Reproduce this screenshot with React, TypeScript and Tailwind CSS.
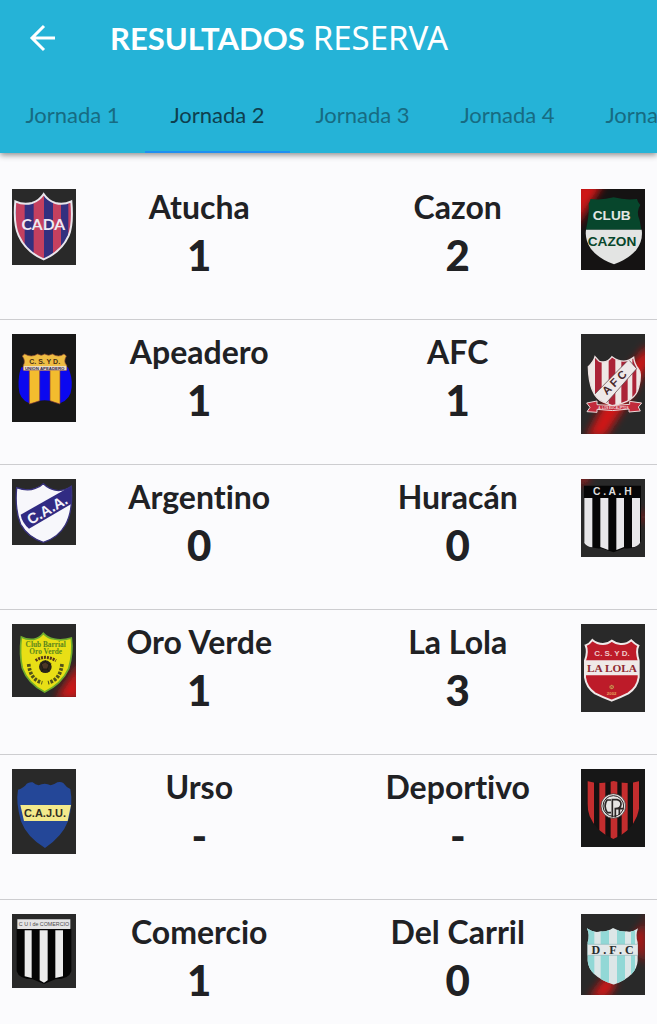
import { useState, type ReactNode } from 'react';

type CrestProps = {
  title: string;
  height: number;
  children: ReactNode;
};

const Crest = ({ title, height, children }: CrestProps) => (
  <svg
    role="img"
    aria-label={title}
    viewBox={`0 0 192 ${height}`}
    className="block w-16 shrink-0 bg-[#292929]"
  >
    {children}
  </svg>
);

// Diagonal red light behind some of the crests
const Glow = ({ id, d }: { id: string; d: string }) => (
  <>
    <defs>
      <filter id={id} x="-50%" y="-50%" width="200%" height="200%">
        <feGaussianBlur stdDeviation="12" />
      </filter>
    </defs>
    <path d={d} fill="#d01414" filter={`url(#${id})`} />
  </>
);

const Atucha = () => (
  <Crest title="Atucha" height={228}>
    <clipPath id="atucha">
      <path d="M95 15Q82 35 60 42Q34 49 10 37Q4 105 20 140Q42 189 95 211Q148 189 170 140Q184 105 178 37Q154 49 130 42Q108 35 95 15Z" />
    </clipPath>
    <g clipPath="url(#atucha)">
      <rect width="192" height="228" fill="#33307f" />
      <path d="M12 0h26v228H12zM65 0h31v228H65zM123 0h24v228h-24zM169 0h14v228h-14z" fill="#c4405f" />
    </g>
    <path
      d="M95 15Q82 35 60 42Q34 49 10 37Q4 105 20 140Q42 189 95 211Q148 189 170 140Q184 105 178 37Q154 49 130 42Q108 35 95 15Z"
      fill="none"
      stroke="#e9e6ec"
      strokeWidth="6"
    />
    <text x="94" y="124" textAnchor="middle" className="fill-[#eee9f2] font-['Lato'] text-[47px] font-bold">
      CADA
    </text>
  </Crest>
);

const Cazon = () => (
  <Crest title="Cazon" height={243}>
    <rect width="192" height="243" fill="#151313" />
    <Glow id="cazon-glow" d="M-20-20H70L26 50L-20 120Z" />
    <path d="M23 44Q29 33 28 30Q65 34 98 25Q132 34 168 30Q170 40 178 48Q164 68 176 94L181 122H15Q26 70 23 44Z" fill="#07462c" />
    <path d="M15 122H182Q187 156 165 184Q142 210 99 226Q54 210 30 180Q11 154 15 122Z" fill="#e3e4e3" />
    <text x="92" y="93" textAnchor="middle" className="fill-[#e3e6e4] font-['Liberation_Sans'] text-[41px] font-bold">
      CLUB
    </text>
    <text x="93" y="170" textAnchor="middle" className="fill-[#07462c] font-['Liberation_Sans'] text-[41px] font-bold">
      CAZON
    </text>
  </Crest>
);

const Apeadero = () => (
  <Crest title="Apeadero" height={264}>
    <rect width="192" height="264" fill="#181818" />
    <path d="M28 100H168Q182 130 179 160Q177 196 144 208Q98 190 52 208Q21 196 20 160Q18 125 28 100Z" fill="#0b08f0" />
    <path d="M52 106h31v94l-14 5-17 5zM114 106h30v104l-16-5-14-5z" fill="#f3bc2e" stroke="#873a3a" strokeWidth="2" />
    <path
      d="M31 66L38 60Q58 72 77 60Q88 68 98 60Q110 68 121 60Q140 72 156 60L163 66Q153 84 164 94V109H34V94Q42 82 31 66Z"
      fill="#eebd43"
      stroke="#9a5535"
      strokeWidth="2"
    />
    <path d="M35 96H163V109H35Z" fill="#eadbc3" />
    <text x="98" y="90" textAnchor="middle" className="fill-[#493014] font-['Liberation_Sans'] text-[21px] font-bold">
      C. S. Y D.
    </text>
    <text x="98" y="107" textAnchor="middle" className="fill-[#2e2850] font-['Liberation_Sans'] text-[13px] font-bold">
      UNION APEADERO
    </text>
  </Crest>
);

const Afc = () => (
  <Crest title="AFC" height={300}>
    <Glow id="afc-glow" d="M198 34L88 172L16 310H72L130 220L210 80Z" />
    <clipPath id="afc">
      <path d="M93 68Q78 90 55 82Q40 75 42 68Q38 78 22 98Q24 185 66 204L93 215Q164 204 173 160Q184 116 172 104Q160 90 158 70Q128 94 93 68Z" />
    </clipPath>
    <g clipPath="url(#afc)">
      <rect width="192" height="300" fill="#eee7e5" />
      <path d="M42 60h20v160H42zM83 60h20v160H83zM121 60h19v160h-19zM154 60h12v160h-12z" fill="#ab2337" />
      <path d="M35 187L143 77L167 104L74 209Z" fill="#eee8e8" stroke="#4d3035" strokeWidth="2" />
    </g>
    <path
      d="M93 68Q78 90 55 82L42 68Q38 84 22 98Q24 185 66 204L93 215Q164 204 173 160Q184 116 172 104Q160 90 158 70Q128 94 93 68Z"
      fill="none"
      stroke="#ebdfdf"
      strokeWidth="4"
    />
    <text
      x="100"
      y="157"
      textAnchor="middle"
      transform="rotate(-45 100 145)"
      className="fill-[#48272d] font-['Liberation_Sans'] text-[34px] font-bold"
    >
      A F C
    </text>
    <path
      d="M17 207L48 201V212Q95 218 146 211V202L182 207L172 219L178 231L144 234V225Q94 234 48 226V235L18 233L27 220Z"
      fill="#c12a3b"
      stroke="#eadada"
      strokeWidth="3"
    />
    <text x="97" y="225" textAnchor="middle" className="fill-[#f5dddd] font-['Liberation_Sans'] text-[9px] font-bold">
      A. LOS EUCALIPTOS
    </text>
  </Crest>
);

const Argentino = () => (
  <Crest title="Argentino" height={198}>
    <path d="M94 14Q112 32 139 35Q162 34 178 22Q184 96 160 138Q139 176 94 190Q47 174 26 136Q8 92 14 26Q46 38 70 28Q86 23 94 14Z" fill="#f7f7fb" />
    <path d="M178 21L26 107Q30 131 51 149L178 75Z" fill="#312b83" />
    <path
      d="M94 14Q112 32 139 35Q162 34 178 22Q184 96 160 138Q139 176 94 190Q47 174 26 136Q8 92 14 26Q46 38 70 28Q86 23 94 14Z"
      fill="none"
      stroke="#38327d"
      strokeWidth="4"
    />
    <text
      x="106"
      y="107"
      textAnchor="middle"
      transform="rotate(-30 106 92)"
      className="fill-[#f4f3fb] font-['Liberation_Sans'] text-[44px] font-bold"
    >
      C.A.A.
    </text>
  </Crest>
);

const Huracan = () => (
  <Crest title="Huracán" height={234}>
    <Glow id="huracan-glow" d="M0-10H30L10 14H-10ZM192 86l-14 30 14 20z" />
    <path d="M9 20H180V187Q168 212 130 208L98 220L60 208Q20 210 9 187Z" fill="#060606" />
    <path
      d="M10 57H34V205Q18 204 10 192ZM58 57H82V213L58 204ZM106 57H129V204L106 213ZM153 57H177V192Q169 204 153 205Z"
      fill="#e8e7e9"
    />
    <text x="94" y="49" textAnchor="middle" className="fill-[#ddd] font-['Liberation_Sans'] text-[31px] font-bold">
      C . A . H
    </text>
  </Crest>
);

const OroVerde = () => (
  <Crest title="Oro Verde" height={219}>
    <Glow id="oro-glow" d="M205 110L130 225H205Z" />
    <path
      d="M94 28Q83 43 65 46Q44 48 28 39Q22 92 31 132Q48 179 98 204Q149 180 170 134Q184 86 178 42Q148 51 126 45Q107 42 94 28Z"
      fill="#e8df16"
      stroke="#6fac2e"
      strokeWidth="5"
    />
    <text x="101" y="68" textAnchor="middle" className="fill-[#58851d] font-['Liberation_Serif'] text-[22px] font-bold">
      Club Barrial
    </text>
    <text x="101" y="89" textAnchor="middle" className="fill-[#58851d] font-['Liberation_Serif'] text-[22px] font-bold">
      Oro Verde
    </text>
    <path d="M71 110Q98 90 132 110" fill="none" stroke="#56341b" strokeWidth="9" strokeDasharray="6 3" />
    <circle cx="100" cy="128" r="19" fill="#29251b" />
    <path d="M88 120l12-6 11 8-5 13h-13zM100 114v-5M111 122l7-3M106 135l5 8M93 135l-5 8" fill="#4c3726" stroke="#15130e" strokeWidth="2" />
    <path d="M50 120Q55 168 91 176M150 120Q145 168 108 176" fill="none" stroke="#51531a" strokeWidth="11" strokeDasharray="8 4" />
  </Crest>
);

const LaLola = () => (
  <Crest title="La Lola" height={264}>
    <path
      d="M92 50Q80 60 66 60Q48 60 34 48Q26 60 14 64Q22 82 12 110L12 160Q16 190 42 208Q66 220 92 230Q118 220 142 208Q169 190 173 160V110Q164 80 172 65Q162 60 151 49Q136 62 118 60Q104 59 92 50Z"
      fill="#bd1b29"
      stroke="#efe8e8"
      strokeWidth="6"
    />
    <path d="M12 109H173V154H12Z" fill="#efe9e8" />
    <text x="93" y="97" textAnchor="middle" className="fill-[#efcaca] font-['Liberation_Sans'] text-[24px] font-bold">
      C. S. Y D.
    </text>
    <text x="93" y="143" textAnchor="middle" className="fill-[#8e2931] font-['Liberation_Serif'] text-[34px] font-bold">
      LA LOLA
    </text>
    <circle cx="92" cy="189" r="7" fill="#d38a4f" />
    <path d="M84 181l16 15M100 181l-16 15" stroke="#993429" strokeWidth="2" />
    <text x="92" y="214" textAnchor="middle" className="fill-[#e5a45d] font-['Liberation_Sans'] text-[13px] font-bold">
      2002
    </text>
  </Crest>
);

const Urso = () => (
  <Crest title="Urso" height={255}>
    <path
      d="M44 44Q52 38 62 40Q70 47 80 49Q98 40 116 49Q128 46 136 40Q146 37 154 42Q162 54 175 60Q184 107 168 157Q151 202 99 237Q45 205 27 157Q11 101 18 62Q36 56 44 44Z"
      fill="#244798"
    />
    <path d="M25 108H177L167 156H36Z" fill="#f3e98b" />
    <text x="99" y="144" textAnchor="middle" className="fill-[#312e22] font-['Liberation_Sans'] text-[33px] font-bold">
      C.A.J.U.
    </text>
  </Crest>
);

const Deportivo = () => (
  <Crest title="Deportivo" height={234}>
    <rect width="192" height="234" fill="#171717" />
    <clipPath id="deportivo">
      <path d="M18 36Q58 48 98 36Q138 48 176 36Q184 94 168 142Q149 190 97 210Q45 188 26 142Q12 98 18 36Z" />
    </clipPath>
    <g clipPath="url(#deportivo)">
      <rect width="192" height="234" fill="#151111" />
      <path d="M20 30h19v190H20zM55 30h18v190H55zM89 30h20v190H89zM122 30h18v190h-18zM156 30h18v190h-18z" fill="#c42d2e" />
    </g>
    <circle cx="97" cy="111" r="37" fill="#e7e4e3" stroke="#2b2424" strokeWidth="2" />
    <path d="M90 93H78Q66 111 79 131H90" fill="none" stroke="#2b2626" strokeWidth="5" />
    <path d="M94 145V92H108Q120 94 120 106Q119 119 103 119V145M110 119H128M115 121V137" fill="none" stroke="#2b2626" strokeWidth="5" />
    <circle cx="97" cy="111" r="31" fill="none" stroke="#2b2626" strokeWidth="3" />
  </Crest>
);

const Comercio = () => (
  <Crest title="Comercio" height={222}>
    <path d="M14 44H178V172Q172 195 130 196L96 210L62 196Q20 195 14 172Z" fill="#050505" />
    <path d="M16 16H175V45H16Z" fill="#e5e5e5" />
    <text x="96" y="37" textAnchor="middle" className="fill-[#4c4c4c] font-['Liberation_Sans'] text-[16px]">
      C U I de COMERCIO
    </text>
    <path d="M38 49H59V192L38 187ZM83 49H107V199L96 206L83 199ZM130 49H153V187L130 192Z" fill="#ececec" />
  </Crest>
);

const DelCarril = () => (
  <Crest title="Del Carril" height={243}>
    <Glow id="carril-glow" d="M205 5L162 65L172 115L192 150V5ZM80 178L24 252H78L106 210Z" />
    <clipPath id="carril">
      <path d="M18 43Q40 58 58 52Q79 54 96 42Q116 54 136 52Q155 56 171 43Q163 64 170 85V140Q168 186 98 212Q22 186 20 140V85Q27 64 18 43Z" />
    </clipPath>
    <g clipPath="url(#carril)">
      <rect width="192" height="243" fill="#dce6e7" />
      <path d="M12 30h28v190H12zM59 30h25v190H59zM108 30h24v190h-24zM150 30h12v190h-12z" fill="#92d8d6" />
      <path d="M12 91H180V124H12Z" fill="#e3e8e9" stroke="#90b8ba" strokeWidth="2" />
    </g>
    <text x="95" y="120" textAnchor="middle" className="fill-[#282b2c] font-['Liberation_Serif'] text-[36px] font-bold">
      D . F . C
    </text>
  </Crest>
);

const jornadas = ['Jornada 1', 'Jornada 2', 'Jornada 3', 'Jornada 4', 'Jornada 5'];

const partidos = [
  { local: 'Atucha', golesLocal: '1', EscudoLocal: Atucha, visitante: 'Cazon', golesVisitante: '2', EscudoVisitante: Cazon },
  { local: 'Apeadero', golesLocal: '1', EscudoLocal: Apeadero, visitante: 'AFC', golesVisitante: '1', EscudoVisitante: Afc },
  { local: 'Argentino', golesLocal: '0', EscudoLocal: Argentino, visitante: 'Huracán', golesVisitante: '0', EscudoVisitante: Huracan },
  { local: 'Oro Verde', golesLocal: '1', EscudoLocal: OroVerde, visitante: 'La Lola', golesVisitante: '3', EscudoVisitante: LaLola },
  { local: 'Urso', golesLocal: '-', EscudoLocal: Urso, visitante: 'Deportivo', golesVisitante: '-', EscudoVisitante: Deportivo },
  { local: 'Comercio', golesLocal: '1', EscudoLocal: Comercio, visitante: 'Del Carril', golesVisitante: '0', EscudoVisitante: DelCarril },
];

const Equipo = ({ nombre, goles }: { nombre: string; goles: string }) => (
  <div className="flex flex-1 flex-col items-center font-bold">
    <span className="text-[32px] leading-9 whitespace-nowrap [font-variant-ligatures:none]">{nombre}</span>
    <span className="text-[42px] leading-15 font-black">{goles}</span>
  </div>
);

export default function App() {
  const [activa, setActiva] = useState('Jornada 2');

  return (
    <div className="min-h-screen bg-[#fbfbfd] font-['Lato',sans-serif] text-[#202124]">
      <header className="relative bg-[#25b3d7] shadow-[0_2px_6px_rgba(0,0,0,0.45)]">
        <div className="flex h-[76px] items-center pl-7">
          <button type="button" aria-label="Volver" className="mr-[52px] flex text-white">
            <svg viewBox="0 0 30 30" className="size-[30px]" fill="none" stroke="currentColor" strokeWidth="3">
              <path d="M27 15H5M16 3L4 15l12 12" />
            </svg>
          </button>
          <h1 className="flex items-center gap-2 text-white">
            <span className="text-[31px] font-bold">RESULTADOS</span>
            <span className="font-['Noto_Sans'] text-[33px]">RESERVA</span>
          </h1>
        </div>
        <nav className="flex h-[77px] overflow-x-auto [scrollbar-width:none]">
          {jornadas.map((jornada) => (
            <button
              key={jornada}
              type="button"
              onClick={() => setActiva(jornada)}
              className={`w-[145px] shrink-0 border-b-2 pt-0.5 text-[22px] ${
                jornada === activa ? 'border-[#1f8ff0] text-[#0e3f4e]' : 'border-transparent text-[#176b82]'
              }`}
            >
              {jornada}
            </button>
          ))}
        </nav>
      </header>
      <ul className="pt-[22px]">
        {partidos.map(({ local, golesLocal, EscudoLocal, visitante, golesVisitante, EscudoVisitante }) => (
          <li key={local} className="flex h-[145px] items-start gap-3 border-b border-[#cdcdd0] px-3 pt-3.5">
            <div className="flex flex-1 items-start">
              <EscudoLocal />
              <Equipo nombre={local} goles={golesLocal} />
            </div>
            <div className="flex flex-1 items-start">
              <Equipo nombre={visitante} goles={golesVisitante} />
              <EscudoVisitante />
            </div>
          </li>
        ))}
      </ul>
    </div>
  );
}
